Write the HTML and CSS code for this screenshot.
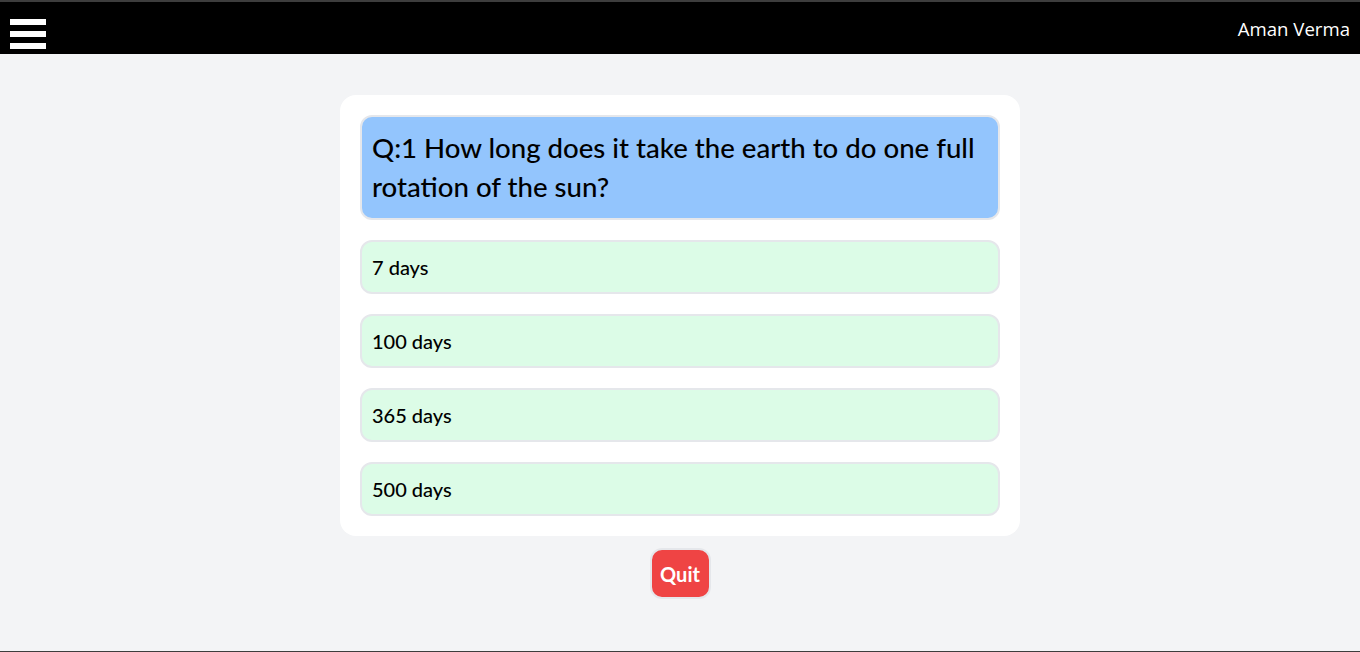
FILE: index.html
```html
<!DOCTYPE html>
<html>
<head>
<meta charset="utf-8">
<link rel="stylesheet" href="styles.css">
</head>
<body>
<div class="frame">
  <header class="nav">
    <div class="burger"><span></span><span></span><span></span></div>
    <div class="user">Aman Verma</div>
  </header>
  <main class="main">
    <div class="card">
      <div class="question">Q:1 How long does it take the earth to do one full rotation of the sun?</div>
      <div class="option">7 days</div>
      <div class="option">100 days</div>
      <div class="option">365 days</div>
      <div class="option">500 days</div>
    </div>
    <button class="quit">Quit</button>
  </main>
</div>
</body>
</html>
```
FILE: styles.css
```css
* { box-sizing: border-box; }
html, body { margin: 0; padding: 0; }
body {
  font-family: "Lato", "Open Sans", sans-serif;
  background: #f3f4f6;
  height: 652px;
  overflow: hidden;
}
.frame {
  height: 652px;
  border-top: 2px solid #3d3d3d;
  border-bottom: 1px solid #3d3d3d;
  display: flex;
  flex-direction: column;
}
.nav {
  height: 52px;
  background: #000;
  display: flex;
  align-items: center;
  justify-content: space-between;
  padding: 0 10px;
}
.burger {
  display: flex;
  flex-direction: column;
  gap: 6px;
  width: 36px;
  margin-top: 12px;
}
.burger span {
  display: block;
  height: 6px;
  background: #fff;
}
.user {
  font-family: "Open Sans", sans-serif;
  color: #fff;
  font-size: 18.6px;
}
.main {
  flex: 1;
  display: flex;
  flex-direction: column;
  align-items: center;
  padding-top: 41px;
}
.card {
  width: 680px;
  background: #fff;
  border-radius: 16px;
  padding: 20px;
  display: flex;
  flex-direction: column;
  gap: 20px;
}
.question {
  background: #93c5fd;
  border: 2px solid #e5e7eb;
  border-radius: 12px;
  padding: 11px 10px 12px;
  font-size: 27.6px;
  line-height: 39px;
  font-weight: 500;
  color: #000;
}
.option {
  background: #dcfce7;
  border: 2px solid #e5e7eb;
  border-radius: 12px;
  padding: 11px 10px;
  font-size: 20px;
  line-height: 28px;
  font-weight: 500;
  color: #000;
}
.quit {
  margin-top: 12px;
  width: 61px;
  height: 51px;
  background: #ef4444;
  color: #fff;
  border: 2px solid #e5e7eb;
  border-radius: 12px;
  font-family: inherit;
  font-weight: 700;
  font-size: 20px;
  padding: 0;
}
```
